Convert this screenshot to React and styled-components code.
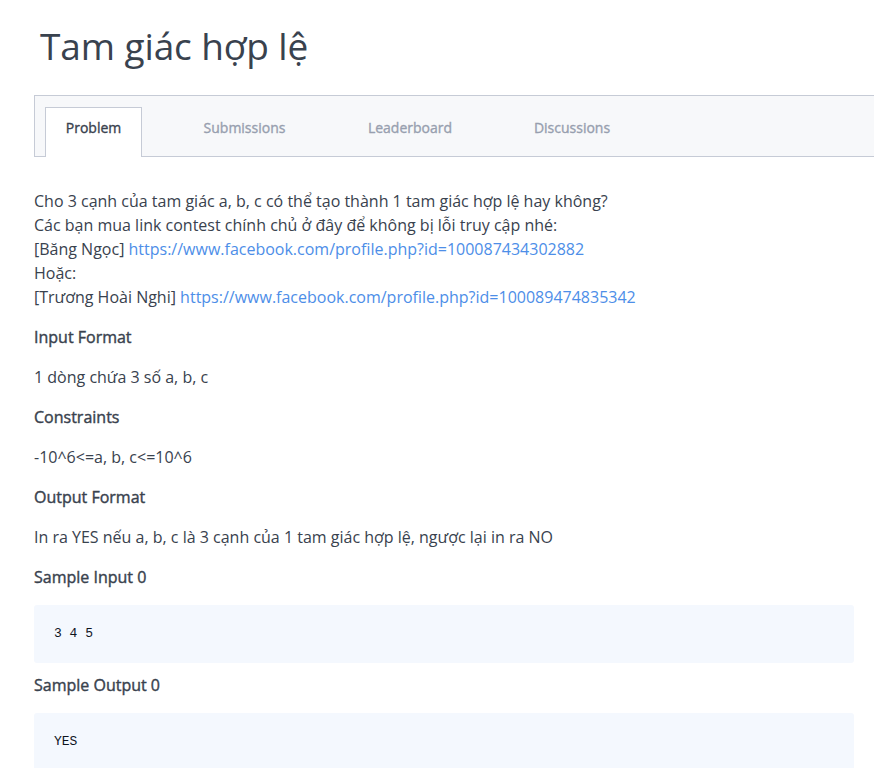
import styled, { createGlobalStyle } from 'styled-components';

const GlobalStyle = createGlobalStyle`
  html, body {
    margin: 0;
    padding: 0;
    background: #fff;
    overflow-x: hidden;
  }
  body {
    font-family: "Open Sans", "Liberation Sans", sans-serif;
    color: #39424e;
  }
`;

const Page = styled.div`
  padding: 0 20px 0 34px;
`;

const Title = styled.h1`
  margin: 0;
  padding: 20px 0 0 6px;
  font-size: 37px;
  font-weight: 400;
  line-height: 52px;
  color: #39424e;
  letter-spacing: -0.1px;
`;

const TabBar = styled.div`
  display: flex;
  align-items: flex-end;
  margin-top: 23px;
  margin-right: -40px;
  height: 60px;
  padding-left: 10px;
  background: #f7f8fa;
  border: 1px solid #c6cbd6;
`;

const Tab = styled.div`
  box-sizing: border-box;
  height: 50px;
  margin-bottom: -1px;
  padding-bottom: 10px;
  width: ${(p) => p.$width}px;
  display: flex;
  align-items: center;
  justify-content: center;
  font-size: 14px;
  font-weight: 400;
  -webkit-text-stroke: 0.35px currentColor;
  color: ${(p) => (p.$active ? '#39424e' : '#979faf')};
  background: ${(p) => (p.$active ? '#fff' : 'transparent')};
  border: 1px solid ${(p) => (p.$active ? '#c6cbd6' : 'transparent')};
  border-bottom: none;
`;

const Body = styled.div`
  padding-top: 32px;
  font-size: 16px;
  line-height: 24px;
`;

const Para = styled.p`
  margin: 0;
`;

const Link = styled.a`
  color: #4d8ee8;
  text-decoration: none;
`;

const Heading = styled.h3`
  margin: ${(p) => (p.$afterCode ? '10px' : '16px')} 0 0;
  font-size: 16px;
  font-weight: 400;
  -webkit-text-stroke: 0.4px currentColor;
  line-height: 24px;
  color: #39424e;
`;

const Text = styled.p`
  margin: 16px 0 0;
`;

const CodeBlock = styled.pre`
  margin: 16px 0 0;
  padding: 19px 20px;
  background: #f4f8fe;
  border-radius: 3px;
  font-family: "Liberation Mono", "DejaVu Sans Mono", monospace;
  font-size: 13px;
  line-height: 20px;
  color: #0e141e;
  white-space: pre;
`;

const tabs = [
  { label: 'Problem', width: 97, active: true },
  { label: 'Submissions', width: 205 },
  { label: 'Leaderboard', width: 126 },
  { label: 'Discussions', width: 198 },
];

const App = () => (
  <>
    <GlobalStyle />
    <Page>
      <Title>Tam giác hợp lệ</Title>
      <TabBar>
        {tabs.map((t) => (
          <Tab key={t.label} $active={t.active} $width={t.width}>
            {t.label}
          </Tab>
        ))}
      </TabBar>
      <Body>
        <Para>Cho 3 cạnh của tam giác a, b, c có thể tạo thành 1 tam giác hợp lệ hay không?</Para>
        <Para>Các bạn mua link contest chính chủ ở đây để không bị lỗi truy cập nhé:</Para>
        <Para>
          [Băng Ngọc] <Link href="#">https://www.facebook.com/profile.php?id=100087434302882</Link>
        </Para>
        <Para>Hoặc:</Para>
        <Para>
          [Trương Hoài Nghi] <Link href="#">https://www.facebook.com/profile.php?id=100089474835342</Link>
        </Para>
        <Heading>Input Format</Heading>
        <Text>1 dòng chứa 3 số a, b, c</Text>
        <Heading>Constraints</Heading>
        <Text>-10^6&lt;=a, b, c&lt;=10^6</Text>
        <Heading>Output Format</Heading>
        <Text>In ra YES nếu a, b, c là 3 cạnh của 1 tam giác hợp lệ, ngược lại in ra NO</Text>
        <Heading>Sample Input 0</Heading>
        <CodeBlock>3 4 5</CodeBlock>
        <Heading $afterCode>Sample Output 0</Heading>
        <CodeBlock>YES</CodeBlock>
      </Body>
    </Page>
  </>
);

export default App;
